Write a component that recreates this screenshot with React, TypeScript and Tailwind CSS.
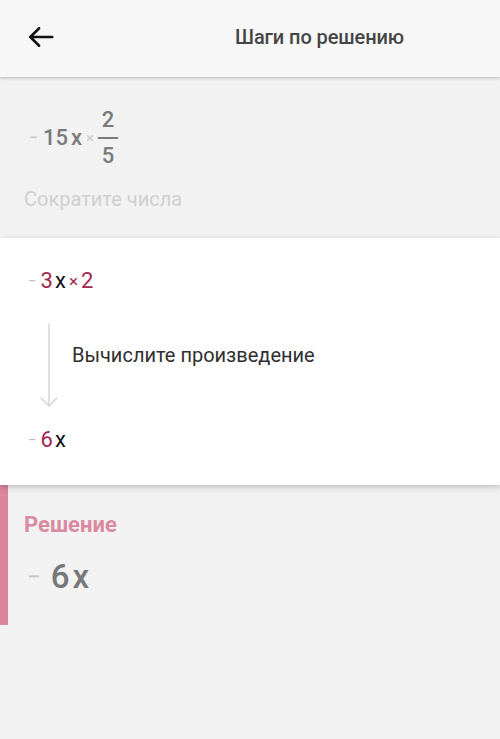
import React from "react";

export default function App() {
  return (
    <div className="w-[500px] h-[739px] bg-[#f2f2f2] flex flex-col overflow-hidden" style={{ fontFamily: "Roboto, 'Noto Sans', sans-serif" }}>
      <div className="h-[77px] shrink-0 bg-[#f7f7f7] flex items-center pb-[4px] relative z-20 shadow-[0_1px_3px_rgba(0,0,0,0.25)]">
        <div className="w-[82px] flex items-center pl-[26px]">
          <svg width="30" height="30" viewBox="0 0 24 24" fill="none" stroke="#111" strokeWidth="2" strokeLinecap="round" strokeLinejoin="round">
            <path d="M21 12H3.5" />
            <path d="M10.5 5l-7 7 7 7" />
          </svg>
        </div>
        <div className="flex-1 pl-[153px] text-[20px] font-medium text-[#454545] leading-none tracking-[-0.1px]">Шаги по решению</div>
      </div>

      <div className="h-[161px] shrink-0 bg-[#f2f2f2] pl-[29px] pt-[32px] relative z-0">
        <div className="flex items-center text-[#7a7a7a] font-medium text-[22px] leading-none">
          <span className="text-[#c9c9c9] text-[16px] mr-[5px]">−</span>
          <span>15</span>
          <span className="ml-[3px]">x</span>
          <span className="text-[#cfcfcf] text-[15px] mx-[4px]">×</span>
          <span className="flex flex-col items-center">
            <span className="leading-none">2</span>
            <span className="w-[20px] h-[2px] bg-[#7a7a7a] my-[6px]"></span>
            <span className="leading-none">5</span>
          </span>
        </div>
        <div className="mt-[22px] text-[20px] text-[#cfcfcf] leading-none -ml-[5px]">Сократите числа</div>
      </div>

      <div className="h-[247px] shrink-0 bg-white relative z-10 shadow-[0_2px_6px_rgba(0,0,0,0.22)] pl-[28px] pt-[32px]">
        <div className="flex items-center text-[22px] leading-none">
          <span className="text-[#bdbdbd] text-[15px] mr-[4px]">−</span>
          <span className="text-[#a3284f]">3</span>
          <span className="text-[#111] ml-[2px]">x</span>
          <span className="text-[#a3284f] text-[17px] mx-[3px]">×</span>
          <span className="text-[#a3284f]">2</span>
        </div>
        <div className="flex mt-[30px]">
          <div className="w-[42px] flex justify-center">
            <svg width="24" height="88" viewBox="0 0 24 88" fill="none" stroke="#d5d5d5" strokeWidth="1.5" strokeLinecap="round">
              <path d="M12 2V84" />
              <path d="M4 76l8 8 8-8" />
            </svg>
          </div>
          <div className="pt-[23px] pl-[2px] text-[20px] text-[#2f2f2f] leading-none">Вычислите произведение</div>
        </div>
        <div className="flex items-center text-[22px] leading-none mt-[19px]">
          <span className="text-[#bdbdbd] text-[15px] mr-[4px]">−</span>
          <span className="text-[#a3284f]">6</span>
          <span className="text-[#111] ml-[2px]">x</span>
        </div>
      </div>

      <div className="flex">
        <div className="w-[8px] h-[140px] bg-[#dc869e]"></div>
        <div className="pl-[16px] pt-[29px]">
          <div className="text-[22px] font-bold text-[#d98aa0] leading-none">Решение</div>
          <div className="flex items-center mt-[24px] leading-none">
            <span className="text-[#c4c4c4] text-[24px] mr-[10px] ml-[3px]">−</span>
            <span className="text-[#777] text-[33px] font-medium">6</span>
            <span className="text-[#777] text-[33px] font-medium ml-[3px]">x</span>
          </div>
        </div>
      </div>
    </div>
  );
}
